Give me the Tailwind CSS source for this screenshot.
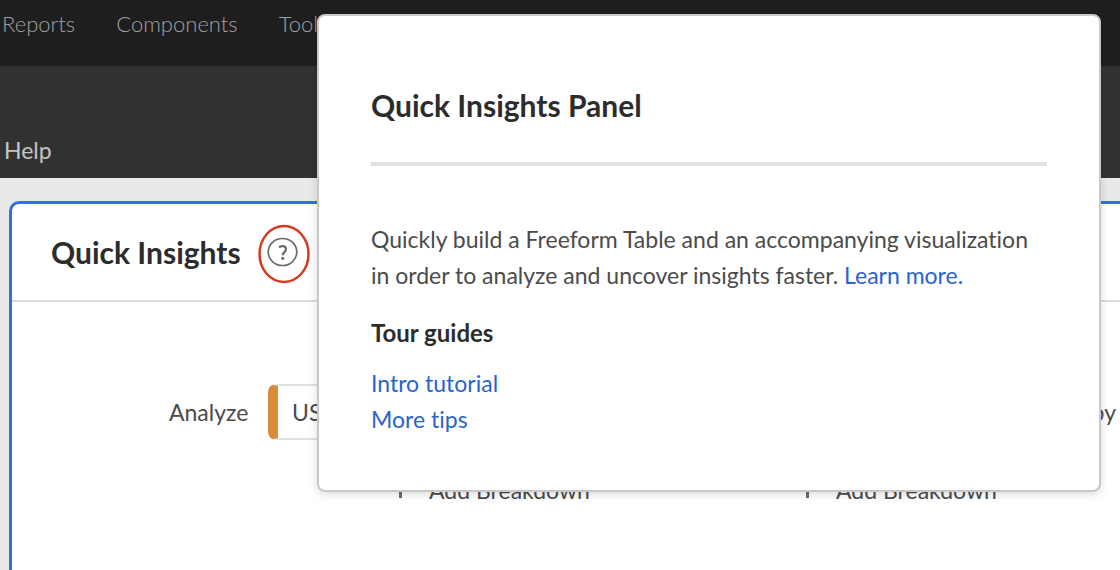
<!DOCTYPE html>
<html lang="en">
<head>
<meta charset="utf-8">
<title>Quick Insights</title>
<script src="https://cdn.jsdelivr.net/npm/@tailwindcss/browser@4"></script>
</head>
<body class="relative flex h-screen flex-col overflow-hidden bg-[#e9e9e9] font-['Lato','Open_Sans',sans-serif] text-[23px] leading-9 text-[#4b4b4b] [font-variant-ligatures:none]">
  <nav class="flex h-[66px] shrink-0 gap-[41px] bg-[#1e1e1e] pt-1.5 pl-0.5 text-[22px] font-light text-[#a0a0a0]">
    <a href="#">Reports</a>
    <a href="#">Components</a>
    <a href="#">Tools</a>
  </nav>
  <div class="flex h-28 shrink-0 items-end bg-[#323232] pb-2.5 pl-1 text-[#c4c4c4]">
    <button type="button">Help</button>
  </div>

  <main class="mt-[23px] ml-[9px] flex-1 rounded-tl-[10px] border-t-3 border-l-3 border-[#3571dc] bg-white">
    <header class="flex h-[98px] items-center gap-[17px] border-b-2 border-[#dcdcdc] pl-[39px]">
      <h1 class="text-[30px] font-bold text-[#2c2c2c]">Quick Insights</h1>
      <button type="button" aria-label="Help with Quick Insights" class="pt-1">
        <svg class="h-[60px] w-[52px]" viewBox="0 0 52 60" fill="none">
          <ellipse cx="26" cy="30" rx="24.5" ry="28" stroke="#d63b20" stroke-width="2.5"/>
          <ellipse cx="24.5" cy="28" rx="14.3" ry="13.5" stroke="#6b6b6b" stroke-width="1.7"/>
          <path d="M21 23.3C22.2 22.5 23.3 22.2 24.5 22.2C26.7 22.2 28 23.3 28 25C28 28 24.7 28.2 24.7 31.3" stroke="#6b6b6b" stroke-width="2.2"/>
          <circle cx="24.7" cy="34.3" r="1.6" fill="#6b6b6b"/>
        </svg>
      </button>
    </header>
    <div class="flex items-center pt-[82px] pr-1 pl-[157px]">
      <label for="metric" class="w-[99px]">Analyze</label>
      <input id="metric" value="US" class="h-14 w-[370px] rounded-lg border-2 border-l-10 border-[#dfdfdf] border-l-[#da8b38] px-3.5">
      <span class="ml-auto">by</span>
    </div>
    <div class="flex pt-8 pl-[387px]">
      <button type="button" class="flex w-[407px] items-end gap-[27px] text-left"><span class="mb-2.5 h-6 w-[3px] bg-[#6e6e6e]"></span>Add Breakdown</button>
      <button type="button" class="flex items-end gap-[27px] text-left"><span class="mb-2.5 h-6 w-[3px] bg-[#6e6e6e]"></span>Add Breakdown</button>
    </div>
  </main>

  <section role="dialog" aria-labelledby="dialog-title" class="absolute top-3.5 right-[19px] left-[317px] rounded-lg border-2 border-[#c9c9c9] bg-white px-[52px] pt-[71px] pb-[53px] shadow-[0_2px_8px_rgba(0,0,0,0.15)]">
    <h2 id="dialog-title" class="text-[30px] font-bold text-[#2c2c2c]">Quick Insights Panel</h2>
    <hr class="mt-[39px] border-t-4 border-[#e1e1e1]">
    <p class="mt-[55px]">Quickly build a Freeform Table and an accompanying visualization in order to analyze and uncover insights faster. <a href="#" class="text-[#2864cc]">Learn more.</a></p>
    <h3 class="mt-[22px] text-2xl/9 font-bold text-[#2c2c2c]">Tour guides</h3>
    <ul class="mt-3.5 text-[#2864cc]">
      <li><a href="#">Intro tutorial</a></li>
      <li><a href="#">More tips</a></li>
    </ul>
  </section>
</body>
</html>
